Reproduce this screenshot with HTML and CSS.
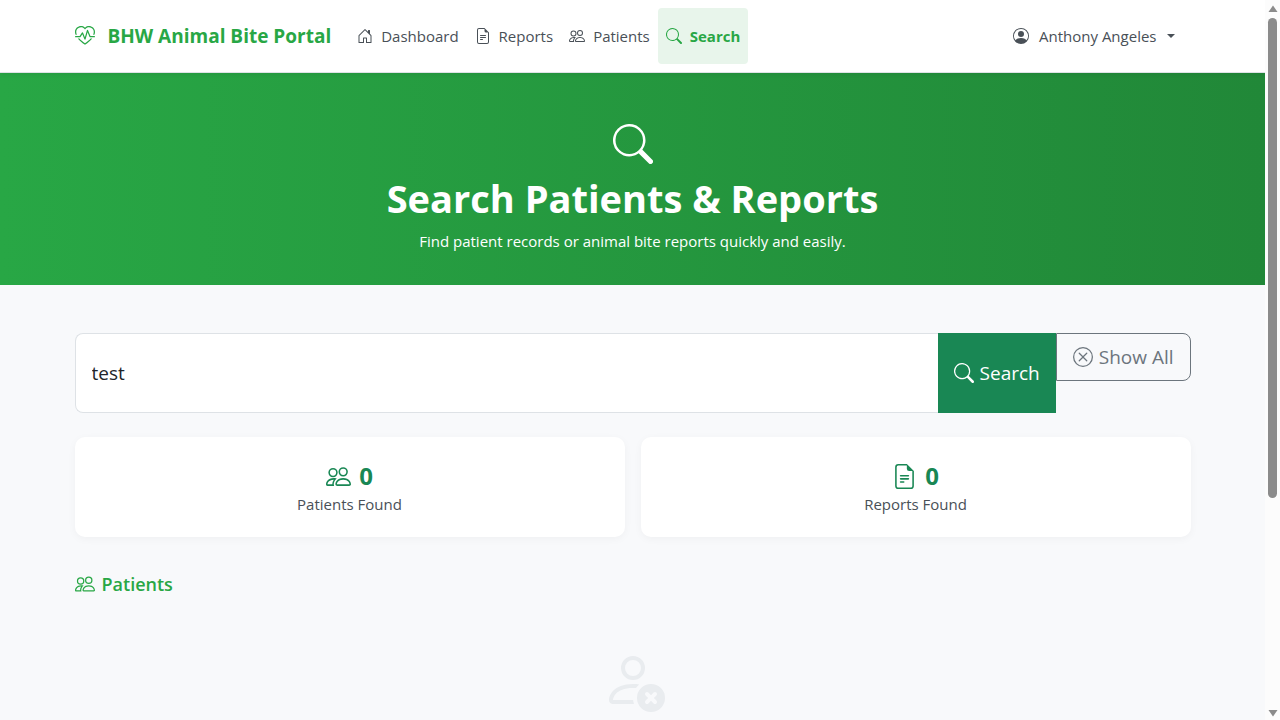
FILE: index.html
```html
<!DOCTYPE html>
<html lang="en">
<head>
<meta charset="utf-8">
<meta name="viewport" content="width=device-width, initial-scale=1">
<title>Search - BHW Animal Bite Portal</title>
<link rel="stylesheet" href="styles.css">
</head>
<body>
<svg class="sprite" aria-hidden="true">
  <symbol id="heart-pulse" viewBox="0 0 16 16"><path d="m8 2.748-.717-.737C5.6.281 2.514.878 1.4 3.053.918 3.995.78 5.323 1.508 7H.43c-2.128-5.697 4.165-8.83 7.394-5.857.06.055.119.112.176.171a3.12 3.12 0 0 1 .176-.17c3.23-2.974 9.522.159 7.394 5.856h-1.078c.728-1.677.59-3.005.108-3.947C13.486.878 10.4.28 8.717 2.01L8 2.748ZM2.212 10h1.315C4.593 11.183 6.05 12.458 8 13.795c1.949-1.337 3.407-2.612 4.473-3.795h1.315c-1.265 1.566-3.14 3.25-5.788 5-2.648-1.75-4.523-3.434-5.788-5Z"/><path d="M10.464 3.314a.5.5 0 0 0-.945.049L7.921 8.956 6.464 5.314a.5.5 0 0 0-.88-.091L3.732 8H.5a.5.5 0 0 0 0 1H4a.5.5 0 0 0 .416-.223l1.473-2.209 1.647 4.118a.5.5 0 0 0 .945-.049l1.598-5.593 1.457 3.642A.5.5 0 0 0 12 9h3.5a.5.5 0 0 0 0-1h-3.162l-1.874-4.686Z"/></symbol>
  <symbol id="house" viewBox="0 0 16 16"><path d="M8.354 1.146a.5.5 0 0 0-.708 0l-6 6A.5.5 0 0 0 1.5 7.5v7a.5.5 0 0 0 .5.5h4.5a.5.5 0 0 0 .5-.5v-4h2v4a.5.5 0 0 0 .5.5H14a.5.5 0 0 0 .5-.5v-7a.5.5 0 0 0-.146-.354L13 5.793V2.5a.5.5 0 0 0-.5-.5h-1a.5.5 0 0 0-.5.5v1.293L8.354 1.146zM2.5 14V7.707l5.5-5.5 5.5 5.5V14H10v-4a.5.5 0 0 0-.5-.5h-3a.5.5 0 0 0-.5.5v4H2.5z"/></symbol>
  <symbol id="file" viewBox="0 0 16 16"><path d="M5.5 7a.5.5 0 0 0 0 1h5a.5.5 0 0 0 0-1h-5zM5 9.5a.5.5 0 0 1 .5-.5h5a.5.5 0 0 1 0 1h-5a.5.5 0 0 1-.5-.5zm0 2a.5.5 0 0 1 .5-.5h2a.5.5 0 0 1 0 1h-2a.5.5 0 0 1-.5-.5z"/><path d="M9.5 0H4a2 2 0 0 0-2 2v12a2 2 0 0 0 2 2h8a2 2 0 0 0 2-2V4.5L9.5 0zm0 1v2A1.5 1.5 0 0 0 11 4.5h2V14a1 1 0 0 1-1 1H4a1 1 0 0 1-1-1V2a1 1 0 0 1 1-1h5.5z"/></symbol>
  <symbol id="people" viewBox="0 0 16 16"><path d="M15 14s1 0 1-1-1-4-5-4-5 3-5 4 1 1 1 1h8Zm-7.978-1A.261.261 0 0 1 7 12.996c.001-.264.167-1.03.76-1.72C8.312 10.629 9.282 10 11 10c1.717 0 2.687.63 3.24 1.276.593.69.758 1.457.76 1.72l-.008.002a.274.274 0 0 1-.014.002H7.022ZM11 7a2 2 0 1 0 0-4 2 2 0 0 0 0 4Zm3-2a3 3 0 1 1-6 0 3 3 0 0 1 6 0ZM6.936 9.28a5.88 5.88 0 0 0-1.23-.247A7.35 7.35 0 0 0 5 9c-4 0-5 3-5 4 0 .667.333 1 1 1h4.216A2.238 2.238 0 0 1 5 13c0-1.01.377-2.042 1.09-2.904.243-.294.526-.569.846-.816ZM4.92 10A5.493 5.493 0 0 0 4 13H1c0-.26.164-1.03.76-1.724.545-.636 1.492-1.256 3.16-1.275ZM1.5 5.5a3 3 0 1 1 6 0 3 3 0 0 1-6 0Zm3-2a2 2 0 1 0 0 4 2 2 0 0 0 0-4Z"/></symbol>
  <symbol id="search" viewBox="0 0 16 16"><path d="M11.742 10.344a6.5 6.5 0 1 0-1.397 1.398h-.001c.03.04.062.078.098.115l3.85 3.85a1 1 0 0 0 1.415-1.414l-3.85-3.85a1.007 1.007 0 0 0-.115-.1zM12 6.5a5.5 5.5 0 1 1-11 0 5.5 5.5 0 0 1 11 0z"/></symbol>
  <symbol id="person-circle" viewBox="0 0 16 16"><path d="M11 6a3 3 0 1 1-6 0 3 3 0 0 1 6 0z"/><path fill-rule="evenodd" d="M0 8a8 8 0 1 1 16 0A8 8 0 0 1 0 8zm8-7a7 7 0 0 0-5.468 11.37C3.242 11.226 4.805 10 8 10s4.757 1.225 5.468 2.37A7 7 0 0 0 8 1z"/></symbol>
  <symbol id="x-circle" viewBox="0 0 16 16"><path d="M8 15A7 7 0 1 1 8 1a7 7 0 0 1 0 14zm0 1A8 8 0 1 0 8 0a8 8 0 0 0 0 16z"/><path d="M4.646 4.646a.5.5 0 0 1 .708 0L8 7.293l2.646-2.647a.5.5 0 0 1 .708.708L8.707 8l2.647 2.646a.5.5 0 0 1-.708.708L8 8.707l-2.646 2.647a.5.5 0 0 1-.708-.708L7.293 8 4.646 5.354a.5.5 0 0 1 0-.708z"/></symbol>
  <symbol id="person-x" viewBox="0 0 16 16"><path d="M11 5a3 3 0 1 1-6 0 3 3 0 0 1 6 0ZM8 7a2 2 0 1 0 0-4 2 2 0 0 0 0 4Zm.256 7a4.474 4.474 0 0 1-.229-1.004H3c.001-.246.154-.986.832-1.664C4.484 10.68 5.711 10 8 10c.26 0 .507.009.74.025.226-.341.496-.65.804-.918C9.077 9.038 8.564 9 8 9c-5 0-6 3-6 4s1 1 1 1h5.256Z"/><path d="M12.5 16a3.5 3.5 0 1 0 0-7 3.5 3.5 0 0 0 0 7Zm-.646-4.854.646.647.646-.647a.5.5 0 0 1 .708.708l-.647.646.647.646a.5.5 0 0 1-.708.708l-.646-.647-.646.647a.5.5 0 0 1-.708-.708l.647-.646-.647-.646a.5.5 0 0 1 .708-.708Z"/></symbol>
</svg>

<header class="navbar">
  <div class="container navbar-row">
    <a class="brand" href="#"><svg class="icon icon-md"><use href="#heart-pulse"/></svg>BHW Animal Bite Portal</a>
    <nav class="nav">
      <a class="nav-link" href="#"><svg class="icon"><use href="#house"/></svg>Dashboard</a>
      <a class="nav-link" href="#"><svg class="icon"><use href="#file"/></svg>Reports</a>
      <a class="nav-link" href="#"><svg class="icon"><use href="#people"/></svg>Patients</a>
      <a class="nav-link active" href="#" aria-current="page"><svg class="icon"><use href="#search"/></svg>Search</a>
    </nav>
    <button class="nav-link user" type="button" aria-haspopup="true"><svg class="icon"><use href="#person-circle"/></svg>Anthony Angeles<span class="caret"></span></button>
  </div>
</header>

<section class="hero">
  <svg class="icon hero-icon"><use href="#search"/></svg>
  <h1 class="hero-title">Search Patients &amp; Reports</h1>
  <p class="hero-text">Find patient records or animal bite reports quickly and easily.</p>
</section>

<main class="container content">
  <form class="search-form" role="search" onsubmit="return false">
    <input class="search-input" type="text" value="test" aria-label="Search patients and reports">
    <button class="search-button" type="submit"><svg class="icon icon-md"><use href="#search"/></svg>Search</button>
    <a class="show-all" href="#"><svg class="icon icon-md"><use href="#x-circle"/></svg>Show All</a>
  </form>

  <div class="stats">
    <div class="stat">
      <div class="stat-value"><svg class="icon icon-lg"><use href="#people"/></svg>0</div>
      <div class="stat-label">Patients Found</div>
    </div>
    <div class="stat">
      <div class="stat-value"><svg class="icon icon-lg"><use href="#file"/></svg>0</div>
      <div class="stat-label">Reports Found</div>
    </div>
  </div>

  <h2 class="section-title"><svg class="icon icon-md"><use href="#people"/></svg>Patients</h2>
  <div class="empty"><svg class="icon empty-icon"><use href="#person-x"/></svg></div>
</main>

<div class="scroll-rail" aria-hidden="true">
  <svg class="scroll-arrow" viewBox="0 0 10 8"><path d="M5 .5 9.500 7H.5Z"/></svg>
  <div class="scroll-track"><div class="scroll-thumb"></div></div>
  <svg class="scroll-arrow" viewBox="0 0 10 8"><path d="M5 7.500 9.500 1H.5Z"/></svg>
</div>
</body>
</html>
```
FILE: styles.css
```css
* {
  box-sizing: border-box;
}

html {
  scrollbar-width: none;
}

body {
  margin: 0;
  padding-right: 15px;
  background: #f8f9fb;
  color: #212529;
  font-family: "Open Sans", "Noto Sans", sans-serif;
  font-size: 15px;
  line-height: 24px;
}

a {
  color: inherit;
  text-decoration: none;
}

button,
input {
  font: inherit;
}

.sprite {
  display: none;
}

.icon {
  flex: none;
  width: 16px;
  height: 16px;
  fill: currentColor;
}

.icon-md {
  width: 20px;
  height: 20px;
}

.icon-lg {
  width: 25px;
  height: 25px;
}

.container {
  max-width: 1140px;
  margin: 0 auto;
  padding: 0 12px;
}

/* Navigation bar */
.navbar {
  position: relative;
  padding: 8px 0;
  background: #fff;
  border-bottom: 1px solid #dee2e6;
  box-shadow: 0 2px 4px rgba(0, 0, 0, 0.06);
}

.navbar-row {
  display: flex;
  align-items: stretch;
}

.brand {
  display: flex;
  align-items: center;
  gap: 13px;
  margin-right: 18px;
  color: #28a745;
  font-size: 19px;
  font-weight: 700;
}

.nav {
  display: flex;
  flex: 1;
}

.nav-link {
  display: flex;
  align-items: center;
  gap: 8px;
  padding: 16px 8px;
  border: 0;
  border-radius: 4px;
  background: none;
  color: #495057;
}

.nav-link.active {
  background: #e8f5eb;
  color: #28a745;
  font-weight: 700;
}

.user {
  gap: 10px;
  padding-right: 16px;
}

.caret {
  border: 4px solid transparent;
  border-top-color: currentColor;
  border-bottom: 0;
}

/* Page banner */
.hero {
  display: flex;
  flex-direction: column;
  align-items: center;
  padding: 51px 12px 32px;
  background: linear-gradient(90deg, #28a745, #218838);
  color: #fff;
  text-align: center;
}

.hero-icon {
  width: 40px;
  height: 40px;
}

.hero-title {
  margin: 10px 0 7px;
  font-size: 38px;
  font-weight: 700;
  line-height: 48px;
}

.hero-text {
  margin: 0;
}

/* Search form */
.content {
  padding-top: 48px;
  padding-bottom: 48px;
}

.search-form {
  display: flex;
  align-items: flex-start;
  margin-bottom: 24px;
  font-size: 19px;
  line-height: 30px;
}

.search-input {
  flex: 1;
  min-width: 0;
  height: 80px;
  padding: 8px 16px;
  border: 1px solid #dee2e6;
  border-right: 0;
  border-radius: 8px 0 0 8px;
  background: #fff;
  color: #212529;
}

.search-button {
  display: flex;
  align-items: center;
  gap: 6px;
  height: 80px;
  padding: 8px 16px;
  border: 0;
  background: #198754;
  color: #fff;
}

.show-all {
  display: flex;
  align-items: center;
  gap: 6px;
  padding: 8px 16px;
  border: 1px solid #6c757d;
  border-radius: 0 8px 8px 0;
  color: #6c757d;
}

/* Result counts */
.stats {
  display: grid;
  grid-template-columns: 1fr 1fr;
  gap: 16px;
  margin-bottom: 32px;
}

.stat {
  padding: 23px 16px 21px;
  border-radius: 10px;
  background: #fff;
  box-shadow: 0 2px 8px rgba(0, 0, 0, 0.04);
  text-align: center;
}

.stat-value {
  display: flex;
  align-items: center;
  justify-content: center;
  gap: 8px;
  height: 32px;
  color: #198754;
  font-size: 24px;
  font-weight: 700;
}

.stat-label {
  color: #495057;
}

.section-title {
  display: flex;
  align-items: center;
  gap: 7px;
  margin: 0 0 49px;
  color: #28a745;
  font-size: 18px;
  font-weight: 600;
  line-height: 30px;
}

.empty {
  display: flex;
  justify-content: center;
  color: #e9ecef;
}

.empty-icon {
  width: 64px;
  height: 64px;
}

/* Scroll rail along the window edge */
.scroll-rail {
  position: fixed;
  top: 0;
  right: 0;
  bottom: 0;
  display: flex;
  flex-direction: column;
  align-items: center;
  width: 15px;
  padding: 5px 0 3px;
  background: #fcfcfc;
}

.scroll-arrow {
  width: 10px;
  height: 8px;
  fill: #8b8b8b;
}

.scroll-track {
  flex: 1;
  padding: 5px 0;
}

.scroll-thumb {
  width: 9px;
  height: 70%;
  border-radius: 5px;
  background: #8b8b8b;
}
```
